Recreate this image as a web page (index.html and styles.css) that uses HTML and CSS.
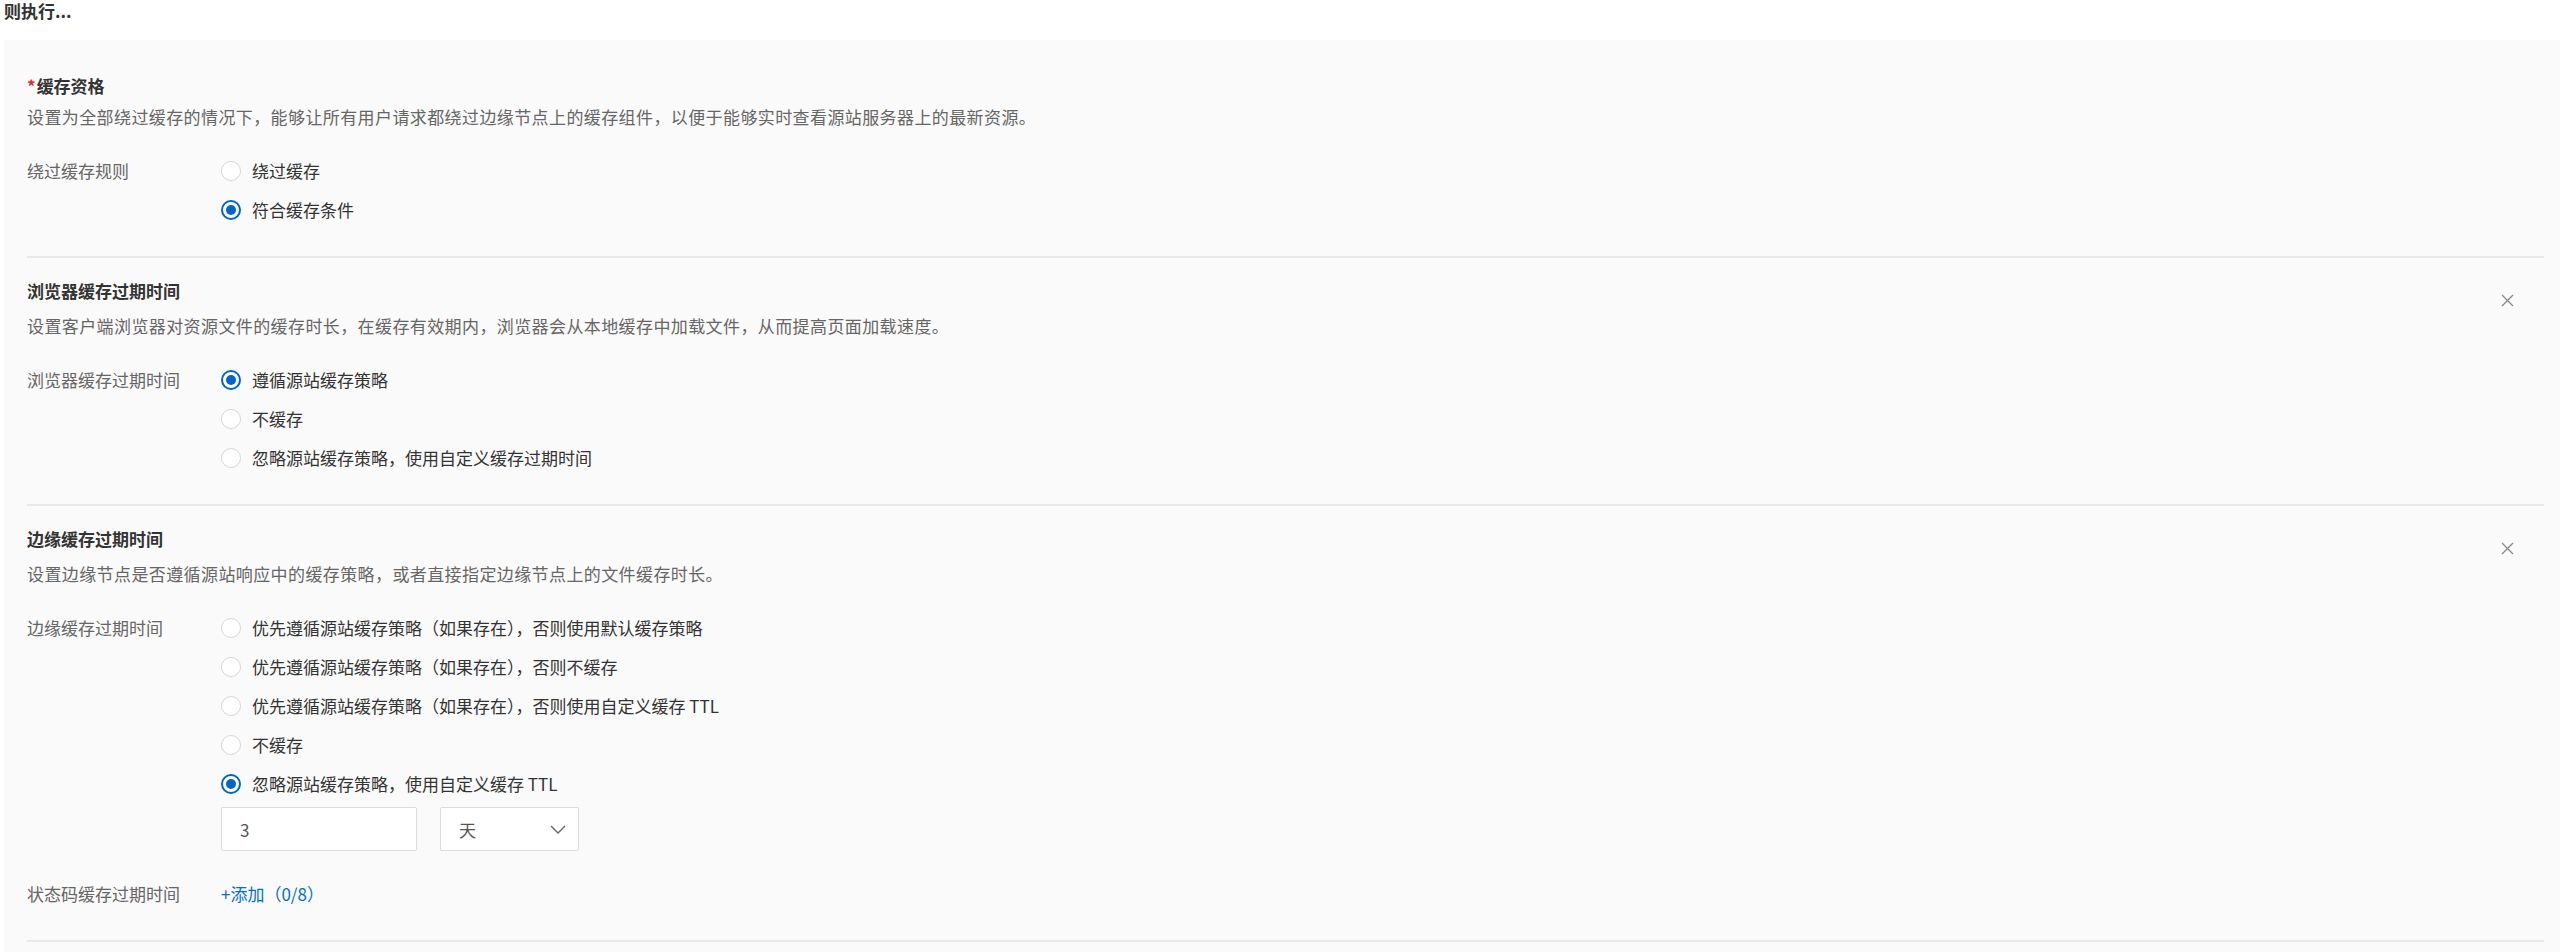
FILE: index.html
```html
<!DOCTYPE html>
<html lang="zh-CN">
<head>
  <meta charset="UTF-8" />
  <title>缓存配置</title>
  <link rel="stylesheet" href="styles.css">
</head>
<body>

  <div class="page-title">则执行...</div>

  <div class="panel">

    <!-- 缓存资格 -->
    <section class="block block-first">
      <div class="block-head">
        <h3 class="block-title"><span class="required">*</span>缓存资格</h3>
      </div>
      <p class="block-desc">设置为全部绕过缓存的情况下，能够让所有用户请求都绕过边缘节点上的缓存组件，以便于能够实时查看源站服务器上的最新资源。</p>
      <div class="field">
        <div class="field-label">绕过缓存规则</div>
        <div class="field-control">
          <div class="radio-group">
            <label class="radio"><span class="radio-dot"></span>绕过缓存</label>
            <label class="radio is-checked"><span class="radio-dot"></span>符合缓存条件</label>
          </div>
        </div>
      </div>
    </section>

    <!-- 浏览器缓存过期时间 -->
    <section class="block">
      <div class="block-head">
        <h3 class="block-title">浏览器缓存过期时间</h3>
        <svg class="close" viewBox="0 0 13 13"><path d="M1 1L12 12M12 1L1 12" /></svg>
      </div>
      <p class="block-desc">设置客户端浏览器对资源文件的缓存时长，在缓存有效期内，浏览器会从本地缓存中加载文件，从而提高页面加载速度。</p>
      <div class="field">
        <div class="field-label">浏览器缓存过期时间</div>
        <div class="field-control">
          <div class="radio-group">
            <label class="radio is-checked"><span class="radio-dot"></span>遵循源站缓存策略</label>
            <label class="radio"><span class="radio-dot"></span>不缓存</label>
            <label class="radio"><span class="radio-dot"></span>忽略源站缓存策略，使用自定义缓存过期时间</label>
          </div>
        </div>
      </div>
    </section>

    <!-- 边缘缓存过期时间 -->
    <section class="block">
      <div class="block-head">
        <h3 class="block-title">边缘缓存过期时间</h3>
        <svg class="close" viewBox="0 0 13 13"><path d="M1 1L12 12M12 1L1 12" /></svg>
      </div>
      <p class="block-desc">设置边缘节点是否遵循源站响应中的缓存策略，或者直接指定边缘节点上的文件缓存时长。</p>
      <div class="field">
        <div class="field-label">边缘缓存过期时间</div>
        <div class="field-control">
          <div class="radio-group">
            <label class="radio"><span class="radio-dot"></span>优先遵循源站缓存策略（如果存在），否则使用默认缓存策略</label>
            <label class="radio"><span class="radio-dot"></span>优先遵循源站缓存策略（如果存在），否则不缓存</label>
            <label class="radio"><span class="radio-dot"></span>优先遵循源站缓存策略（如果存在），否则使用自定义缓存 TTL</label>
            <label class="radio"><span class="radio-dot"></span>不缓存</label>
            <label class="radio is-checked"><span class="radio-dot"></span>忽略源站缓存策略，使用自定义缓存 TTL</label>
          </div>
          <div class="ttl">
            <div class="ttl-input">3</div>
            <div class="ttl-select">
              <span>天</span>
              <svg class="chevron" viewBox="0 0 16 9"><path d="M1 1L8 8L15 1" /></svg>
            </div>
          </div>
        </div>
      </div>
      <div class="field field-status">
        <div class="field-label">状态码缓存过期时间</div>
        <div class="field-control">
          <a class="add-link">+添加（0/8）</a>
        </div>
      </div>
    </section>

  </div>

</body>
</html>
```

FILE: styles.css
```css
body
{
  margin: 0;
  font-family: "Noto Sans CJK SC", "Noto Sans", sans-serif;
  color: #333;
  background: #fff;
}

.page-title
{
  font-size: 17px;
  font-weight: 700;
  line-height: 22px;
  padding-left: 4px;
  margin-bottom: 18px;
}

.panel
{
  margin-left: 4px;
  background: #fafafa;
  padding: 0 16px 20px 23px;
}

.block
{
  border-bottom: 2px solid #e8e8e8;
  padding: 21px 0 34px 0;
}

.block-first
{
  padding-top: 34px;
}

.block-head
{
  display: flex;
  justify-content: space-between;
  align-items: flex-start;
}

.block-title
{
  margin: 0;
  font-size: 17px;
  line-height: 24px;
  font-weight: 700;
  color: #333;
}

.required
{
  color: #d93026;
  margin-right: 1px;
}

.close
{
  width: 13px;
  height: 13px;
  margin: 15px 30px 0 0;
  fill: none;
  stroke: #888;
  stroke-width: 1.3;
}

.block-desc
{
  margin: 7px 0 0;
  font-size: 17px;
  letter-spacing: 0.4px;
  line-height: 24px;
  color: #666;
}

.field
{
  display: flex;
  margin-top: 30px;
}

.field-status
{
  margin-top: 31px;
}

.field-label
{
  width: 194px;
  flex: none;
  font-size: 17px;
  line-height: 24px;
  color: #666;
}

.field-control
{
  display: flex;
  flex-direction: column;
}

.radio-group
{
  display: flex;
  flex-direction: column;
  gap: 15px;
}

.radio
{
  display: flex;
  align-items: center;
  gap: 11px;
  font-size: 17px;
  line-height: 24px;
  color: #333;
}

.radio-dot
{
  width: 20px;
  height: 20px;
  box-sizing: border-box;
  border: 1px solid #d6d6d6;
  border-radius: 50%;
  background: #fff;
  display: flex;
  align-items: center;
  justify-content: center;
}

.radio.is-checked .radio-dot
{
  border: 2px solid #0064c8;
}

.radio.is-checked .radio-dot::after
{
  content: "";
  width: 10px;
  height: 10px;
  border-radius: 50%;
  background: #0064c8;
}

.ttl
{
  display: flex;
  gap: 23px;
  margin-top: 11px;
}

.ttl-input,
.ttl-select
{
  height: 44px;
  box-sizing: border-box;
  border: 1px solid #dcdcdc;
  border-radius: 2px;
  background: #fff;
  font-size: 17px;
  color: #555;
  display: flex;
  align-items: center;
  padding: 0 18px;
}

.ttl-input
{
  width: 196px;
}

.ttl-select
{
  width: 139px;
  justify-content: space-between;
  padding-right: 12px;
}

.chevron
{
  width: 16px;
  height: 9px;
  fill: none;
  stroke: #666;
  stroke-width: 1.4;
}

.add-link
{
  font-size: 17px;
  line-height: 24px;
  color: #0070cc;
  cursor: pointer;
}
```
